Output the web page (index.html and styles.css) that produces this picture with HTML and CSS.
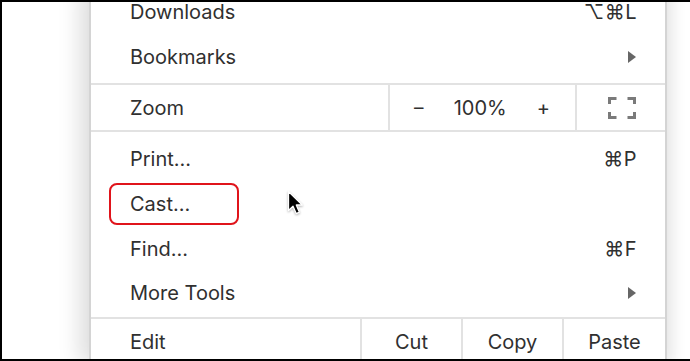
FILE: index.html
```html
<!DOCTYPE html>
<html>
<head>
<meta charset="utf-8">
<link rel="stylesheet" href="styles.css">
</head>
<body>
<div class="frame">
  <div class="menu">
    <div class="item"><span class="label">Downloads</span><span class="key">⌥⌘L</span></div>
    <div class="item"><span class="label">Bookmarks</span><span class="arrow"></span></div>
    <div class="sep sep-a"></div>
    <div class="row zoom">
      <div class="cell cell-label">Zoom</div>
      <div class="cell cell-zoom">
        <span class="minus">–</span>
        <span class="pct">100%</span>
        <span class="plus">+</span>
      </div>
      <div class="cell cell-full">
        <svg width="28" height="22" viewBox="0 0 28 22" fill="none" stroke="#7a7a7a" stroke-width="3">
          <path d="M1.5 7V1.5H8.5"/>
          <path d="M19.5 1.5H26.5V7"/>
          <path d="M1.5 15V20.5H8.5"/>
          <path d="M19.5 20.5H26.5V15"/>
        </svg>
      </div>
    </div>
    <div class="gap-b"></div>
    <div class="item"><span class="label">Print...</span><span class="key">⌘P</span></div>
    <div class="item cast"><span class="label">Cast...</span><span class="highlight"></span></div>
    <div class="item"><span class="label">Find...</span><span class="key">⌘F</span></div>
    <div class="item item-short"><span class="label">More Tools</span><span class="arrow"></span></div>
    <div class="sep sep-c"></div>
    <div class="row edit">
      <div class="cell cell-edit">Edit</div>
      <div class="cell cell-btn">Cut</div>
      <div class="cell cell-btn">Copy</div>
      <div class="cell cell-btn cell-last">Paste</div>
    </div>
  </div>
  <svg class="cursor" width="18" height="26" viewBox="0 0 18 26">
    <path d="M1.5 1.5V20.5L6 16.2L9.2 23.6L12.4 22.2L9.3 15H15.3Z" fill="#000" stroke="#fff" stroke-width="1.3" stroke-linejoin="round"/>
  </svg>
</div>
</body>
</html>
```

FILE: styles.css
```css
html, body {
  margin: 0;
  padding: 0;
  background: #fff;
}

.frame {
  position: relative;
  width: 690px;
  height: 361px;
  box-sizing: border-box;
  border-top: 2px solid #000;
  border-left: 2px solid #000;
  border-bottom: 2px solid #000;
  overflow: hidden;
  display: flex;
  align-items: flex-start;
  background: #fff;
  font-family: Inter, "Noto Sans", sans-serif;
  font-size: 20px;
  color: #303030;
}

.menu {
  margin-left: 87px;
  margin-top: -13px;
  width: 574px;
  flex: none;
  background: #fff;
  border-left: 2px solid #d4d4d4;
  border-right: 2px solid #d4d4d4;
  box-shadow: -10px 0 20px rgba(0, 0, 0, 0.13), 8px 0 12px rgba(0, 0, 0, 0.07);
  display: flex;
  flex-direction: column;
}

.item {
  position: relative;
  height: 45px;
  display: flex;
  align-items: center;
  justify-content: space-between;
  padding: 0 28px 0 39px;
}

.item-short {
  height: 44px;
}

.key {
  letter-spacing: 0.5px;
}

.arrow {
  width: 0;
  height: 0;
  margin-right: 1px;
  border-top: 6px solid transparent;
  border-bottom: 6px solid transparent;
  border-left: 8px solid #666;
}

.sep {
  border-bottom: 2px solid #e2e2e2;
}

.sep-a {
  height: 4px;
}

.sep-c {
  height: 2px;
}

.gap-b {
  height: 4px;
}

.row {
  display: flex;
  height: 45px;
  border-bottom: 2px solid #e2e2e2;
}

.edit {
  border-bottom: none;
}

.cell {
  display: flex;
  align-items: center;
}

.cell-label {
  width: 299px;
  padding-left: 39px;
  box-sizing: border-box;
  border-right: 2px solid #e2e2e2;
}

.cell-zoom {
  width: 187px;
  box-sizing: border-box;
  border-right: 2px solid #e2e2e2;
  justify-content: space-between;
  padding: 0 25px 0 24px;
}

.minus {
  font-size: 19px;
}

.cell-full {
  flex: 1;
  justify-content: center;
  padding-left: 2px;
}

.cell-edit {
  width: 271px;
  padding-left: 39px;
  box-sizing: border-box;
  border-right: 2px solid #e2e2e2;
}

.cell-btn {
  width: 101px;
  box-sizing: border-box;
  justify-content: center;
  border-right: 2px solid #e2e2e2;
}

.cell-last {
  flex: 1;
  border-right: none;
}

.highlight {
  position: absolute;
  left: 18px;
  top: 2px;
  width: 130px;
  height: 42px;
  box-sizing: border-box;
  border: 2px solid #e0141b;
  border-radius: 8px;
}

.cursor {
  position: absolute;
  left: 285px;
  top: 188px;
  filter: drop-shadow(0 1px 1px rgba(0, 0, 0, 0.3));
}
```
